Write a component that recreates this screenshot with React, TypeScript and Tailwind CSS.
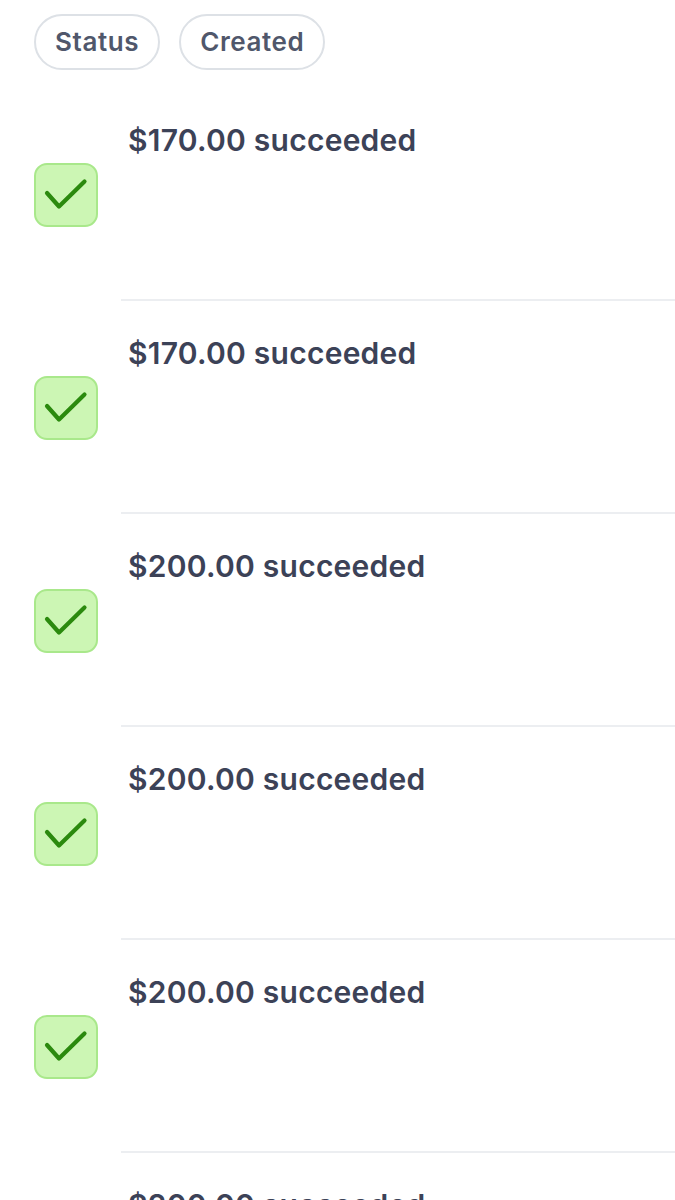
import React from "react";

const payments = ["$170.00", "$170.00", "$200.00", "$200.00", "$200.00", "$200.00"];

function SucceededIcon() {
  return (
    <div className="w-[64px] h-[64px] rounded-[13px] bg-[#ccf6b4] border-2 border-[#a9e88b] flex items-center justify-center">
      <svg width="64" height="64" viewBox="0 0 64 64" fill="none" className="shrink-0">
        <path d="M13 30 L25 43.5 L50.5 18.5" stroke="#2b8a0e" strokeWidth="4.2" strokeLinecap="round" strokeLinejoin="round" />
      </svg>
    </div>
  );
}

function Chip({ label }: { label: string }) {
  return (
    <button className="h-[56px] px-[19px] rounded-full border-2 border-[#dde1e6] text-[26px] font-semibold tracking-[0.6px] text-[#50576b] leading-none">
      {label}
    </button>
  );
}

export default function App() {
  return (
    <div className="w-[675px] h-[1200px] overflow-hidden bg-white" style={{ fontFamily: "Inter, 'Noto Sans', sans-serif" }}>
      <div className="flex gap-[19px] pl-[34px] pt-[14px] pb-[18px]">
        <Chip label="Status" />
        <Chip label="Created" />
      </div>
      {payments.map((amount, i) => (
        <div key={i} className="flex h-[213px]">
          <div className="w-[121px] shrink-0 pl-[34px] flex items-center">
            <SucceededIcon />
          </div>
          <div className="flex-1 border-b-2 border-[#eceef1] pt-[30px] pl-[7px]">
            <div className="text-[30px] font-semibold text-[#3c4257] tracking-[0.25px]">
              {amount} succeeded
            </div>
          </div>
        </div>
      ))}
    </div>
  );
}
